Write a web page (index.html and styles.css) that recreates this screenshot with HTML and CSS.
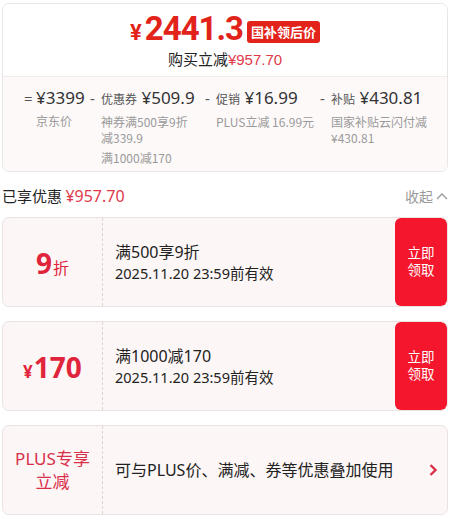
FILE: index.html
```html
<!DOCTYPE html>
<html lang="zh-CN">
<head>
<meta charset="utf-8">
<title>优惠明细</title>
<link rel="stylesheet" href="styles.css">
</head>
<body>
<div class="page">
  <section class="summary">
    <div class="summary-top">
      <div class="price-row">
        <span class="price"><span class="yen">¥</span>2441.3</span>
        <span class="badge">国补领后价</span>
      </div>
      <div class="saving">购买立减<span class="red">¥957.70</span></div>
    </div>
    <div class="summary-bottom">
      <div class="col col1">
        <span class="sign">=</span>
        <div class="col-body">
          <div class="amount">¥3399</div>
          <div class="desc">京东价</div>
        </div>
      </div>
      <div class="col col2">
        <span class="sign">-</span>
        <div class="col-body">
          <div class="amount"><span class="kind">优惠券</span> ¥509.9</div>
          <div class="desc">神券满500享9折减339.9</div>
          <div class="desc extra">满1000减170</div>
        </div>
      </div>
      <div class="col col3">
        <span class="sign">-</span>
        <div class="col-body">
          <div class="amount"><span class="kind">促销</span> ¥16.99</div>
          <div class="desc">PLUS立减 16.99元</div>
        </div>
      </div>
      <div class="col col4">
        <span class="sign">-</span>
        <div class="col-body">
          <div class="amount"><span class="kind">补贴</span> ¥430.81</div>
          <div class="desc">国家补贴云闪付减¥430.81</div>
        </div>
      </div>
    </div>
  </section>

  <div class="enjoyed">
    <div class="enjoyed-left">已享优惠 <span class="pink">¥957.70</span></div>
    <div class="collapse">收起 <svg class="up" width="12" height="8" viewBox="0 0 12 8"><path d="M1 7 L6 2 L11 7" fill="none" stroke="#999" stroke-width="1.3"/></svg></div>
  </div>

  <div class="coupon">
    <div class="coupon-left"><span class="big">9</span><span class="unit">折</span></div>
    <div class="coupon-mid">
      <div class="title">满500享9折</div>
      <div class="date">2025.11.20 23:59前有效</div>
    </div>
    <div class="coupon-btn"><span>立即</span><span>领取</span></div>
  </div>

  <div class="coupon">
    <div class="coupon-left"><span class="cur">¥</span><span class="big">170</span></div>
    <div class="coupon-mid">
      <div class="title">满1000减170</div>
      <div class="date">2025.11.20 23:59前有效</div>
    </div>
    <div class="coupon-btn"><span>立即</span><span>领取</span></div>
  </div>

  <div class="coupon plus">
    <div class="coupon-left plus-left">PLUS专享<br>立减</div>
    <div class="coupon-mid">
      <div class="title">可与PLUS价、满减、券等优惠叠加使用</div>
    </div>
    <div class="chev"><svg width="10" height="14" viewBox="0 0 10 14"><path d="M2.5 2 L7.5 7 L2.5 12" fill="none" stroke="#d9304a" stroke-width="2.4"/></svg></div>
  </div>
</div>
</body>
</html>
```

FILE: styles.css
```css
* { box-sizing: border-box; }
body {
  margin: 0;
  background: #fff;
  font-family: "Noto Sans", "Noto Sans CJK SC", sans-serif;
  color: #333;
}
.page {
  width: 446px;
  margin-left: 2px;
  padding-top: 3px;
}
.red { color: #e2231a; }
.pink { color: #e0394a; }

.summary {
  border: 1px solid #e9e6e6;
  border-radius: 7px;
  overflow: hidden;
}
.summary-top {
  height: 73px;
  background: #fff;
  border-bottom: 1px solid #f3eaea;
  display: flex;
  flex-direction: column;
  align-items: center;
  padding-top: 9px;
}
.price-row {
  display: flex;
  align-items: center;
  gap: 4px;
  height: 36px;
}
.price {
  color: #e2231a;
  font-family: Roboto, "Noto Sans", sans-serif;
  font-weight: 700;
  font-size: 33px;
  letter-spacing: -1px;
  line-height: 36px;
}
.price .yen {
  font-size: 22px;
  margin-right: 3px;
  letter-spacing: 0;
}
.badge {
  background: #e2231a;
  color: #fff;
  font-family: "Noto Sans CJK SC", sans-serif;
  font-weight: 700;
  font-size: 13px;
  line-height: 22px;
  padding: 0 4px;
  border-radius: 3px;
  margin-top: 2px;
}
.saving {
  font-family: "Liberation Sans", "Noto Sans CJK SC", sans-serif;
  font-size: 15px;
  line-height: 18px;
  color: #222;
  margin-top: 2px;
}
.saving .red { color: #e0394a; }

.summary-bottom {
  background: #fdf9f9;
  height: 94px;
  display: grid;
  grid-template-columns: 68px 115px 115px 1fr;
  padding: 9px 0 0 19px;
}
.col { display: flex; }
.sign {
  color: #555;
  font-size: 15px;
  line-height: 24px;
}
.col1 .sign { width: 14px; text-align: left; padding-left: 2px; }
.col2 .sign, .col3 .sign, .col4 .sign { width: 11px; text-align: left; }
.col-body { flex: 1; min-width: 0; }
.amount {
  font-size: 17px;
  line-height: 24px;
  color: #333;
  white-space: nowrap;
}
.kind {
  font-family: "Noto Sans CJK SC", sans-serif;
  font-size: 12px;
  color: #555;
}
.desc {
  font-family: "Noto Sans CJK SC", sans-serif;
  font-size: 12px;
  line-height: 16px;
  color: #9a9a9a;
  margin-top: 3px;
}
.col2 .desc { width: 92px; }
.col2 .desc.extra { margin-top: 4px; }
.col4 .desc { width: 100px; }

.enjoyed {
  display: flex;
  justify-content: space-between;
  align-items: center;
  height: 45px;
  padding-top: 3px;
}
.enjoyed-left {
  font-family: "Noto Sans CJK SC", sans-serif;
  font-size: 15px;
  color: #222;
}
.enjoyed-left .pink { font-family: "Noto Sans", sans-serif; font-size: 16px; }
.collapse {
  font-family: "Noto Sans CJK SC", sans-serif;
  font-size: 14px;
  color: #999;
  display: flex;
  align-items: center;
  gap: 3px;
}

.coupon {
  display: flex;
  height: 90px;
  margin-bottom: 14px;
  background: #fdf6f6;
  border: 1px solid #ebe2e2;
  border-radius: 7px;
  overflow: hidden;
}
.coupon-left {
  width: 100px;
  border-right: 1px dashed #ddd2d2;
  display: flex;
  align-items: baseline;
  justify-content: center;
  padding-top: 30px;
  color: #e0243b;
}
.coupon-left .big {
  font-size: 28px;
  font-weight: 700;
  line-height: 30px;
}
.coupon-left .unit {
  font-family: "Noto Sans CJK SC", sans-serif;
  font-size: 16px;
  margin-left: 1px;
}
.coupon-left .cur {
  font-size: 17px;
  font-weight: 700;
  margin-right: 1px;
}
.coupon-mid {
  flex: 1;
  display: flex;
  flex-direction: column;
  justify-content: center;
  padding-left: 12px;
  color: #222;
}
.title {
  font-family: "Noto Sans", "Noto Sans CJK SC", sans-serif;
  font-size: 16px;
  line-height: 21px;
}
.date {
  font-family: "Noto Sans", "Noto Sans CJK SC", sans-serif;
  font-size: 14.5px;
  line-height: 20px;
}
.coupon-btn {
  width: 52px;
  background: #f3162c;
  color: #fff;
  border-radius: 6px;
  display: flex;
  flex-direction: column;
  align-items: center;
  justify-content: center;
  font-family: "Liberation Sans", "Noto Sans CJK SC", sans-serif;
  font-size: 13.5px;
  line-height: 17px;
}
.plus-left {
  display: flex;
  align-items: center;
  padding-top: 0;
  text-align: center;
  font-family: "Noto Sans", "Noto Sans CJK SC", sans-serif;
  font-size: 17px;
  line-height: 23px;
  color: #d9304a;
}
.plus .title { font-size: 16px; }
.chev {
  width: 28px;
  display: flex;
  align-items: center;
  justify-content: center;
}
```
